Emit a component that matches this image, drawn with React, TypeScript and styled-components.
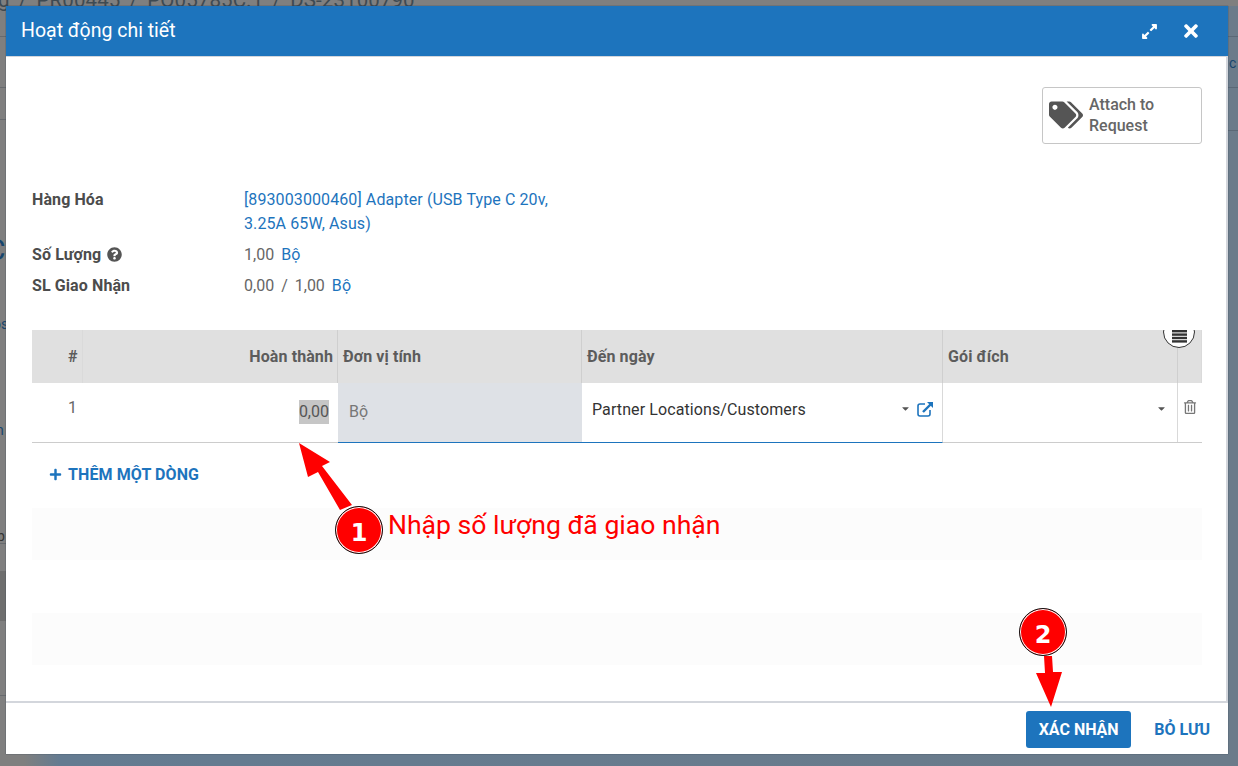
import styled, { createGlobalStyle } from 'styled-components';
import { FaExpandAlt, FaTimes, FaTags, FaQuestionCircle, FaPlus, FaRegTrashAlt, FaCaretDown } from 'react-icons/fa';

const GlobalStyle = createGlobalStyle`
  html, body { margin: 0; padding: 0; height: 100%; }
  body { font-family: Roboto, "Liberation Sans", sans-serif; font-size: 16px; letter-spacing: 0.1px; color: #666; }
`;

const BLUE = '#1d74bd';

const Page = styled.div`
  position: relative;
  width: 1238px;
  height: 766px;
  overflow: hidden;
  padding: 6px 10px 12px 6px;
  box-sizing: border-box;
  background: linear-gradient(90deg, #7f7f7f 0, #7f7f7f 24px, #647b91 60px, #6b7b8a 100%);
`;

const TopShade = styled.div`
  position: absolute;
  left: 0;
  right: 0;
  top: 0;
  height: 6px;
  background: #7f7f7f;
`;

const Rule = styled.div<{ $top: number; $left: number; $width: number }>`
  position: absolute;
  top: ${p => p.$top}px;
  left: ${p => p.$left}px;
  width: ${p => p.$width}px;
  height: 1px;
  background: rgba(60, 70, 80, 0.35);
`;

const BackText = styled.span<{ $top: number; $left: number; $size: number; $color?: string }>`
  position: absolute;
  top: ${p => p.$top}px;
  left: ${p => p.$left}px;
  font-size: ${p => p.$size}px;
  line-height: 1;
  white-space: nowrap;
  word-spacing: 4px;
  color: ${p => p.$color || '#16456d'};
`;

const BackPanel = styled.div`
  position: absolute;
  left: 0;
  top: 571px;
  width: 6px;
  height: 50px;
  background: #6e6e6e;
`;

const Modal = styled.div`
  position: relative;
  height: 748px;
  display: flex;
  flex-direction: column;
  background: #fff;
  box-shadow: 0 0 1px #2c3e50;
`;

const Header = styled.div`
  height: 50px;
  flex: none;
  display: flex;
  align-items: center;
  justify-content: space-between;
  padding: 0 27px 0 15px;
  background: ${BLUE};
  color: #fff;
`;

const Title = styled.h4`
  margin: 0;
  font-size: 19.5px;
  font-weight: 400;
  letter-spacing: 0;
  position: relative;
  top: -1px;
`;

const HeaderTools = styled.div`
  display: flex;
  align-items: center;
  gap: 23px;
`;

const Body = styled.div`
  flex: 1;
  min-height: 0;
  padding: 30px 24px 0 26px;
  border-top: 1px solid #d3d6dc;
  border-right: 2px solid #d3d6dc;
  border-bottom: 2px solid #d3d6dc;
  display: flex;
  flex-direction: column;
`;

const ButtonBox = styled.div`
  display: flex;
  justify-content: flex-end;
`;

const AttachButton = styled.button`
  width: 160px;
  height: 57px;
  box-sizing: border-box;
  display: flex;
  align-items: center;
  gap: 6px;
  padding: 0 6px 2px;
  background: #fff;
  border: 1px solid #c6c6c6;
  border-radius: 3px;
  font: 500 16px/21px Roboto, sans-serif;
  color: #666;
  text-align: left;
`;

const FieldGrid = styled.div`
  margin-top: 44px;
  display: grid;
  grid-template-columns: 212px 320px;
  row-gap: 7px;
  line-height: 24px;
`;

const Label = styled.div`
  font-weight: 700;
  color: #4c4c4c;
  display: flex;
  align-items: flex-start;
  gap: 6px;
`;

const HelpIcon = styled(FaQuestionCircle)`
  margin-top: 4px;
  color: #555;
`;

const Value = styled.div`
  color: #666;
  display: flex;
  gap: 7px;
  letter-spacing: 0;
`;

const ProductLink = styled.a`
  color: ${BLUE};
  letter-spacing: 0.1px;
`;

const TableWrap = styled.div`
  position: relative;
  margin-top: 32px;
  overflow: hidden;
`;

const Row = styled.div<{ $head?: boolean }>`
  display: grid;
  grid-template-columns: 51px 255px 244px 361px 235px 24px;
  height: ${p => (p.$head ? 53 : 60)}px;
  background: ${p => (p.$head ? '#e0e0e0' : '#fff')};
  border-bottom: ${p => (p.$head ? 'none' : '1px solid #ccc')};
  box-sizing: border-box;
`;

const HeadCell = styled.div<{ $right?: boolean; $index?: boolean; $line?: boolean }>`
  display: flex;
  align-items: center;
  justify-content: ${p => (p.$right ? 'flex-end' : 'flex-start')};
  padding: 0 ${p => (p.$right ? 4 : 5)}px 0 ${p => (p.$index ? 36 : 5)}px;
  font-weight: 700;
  color: #5c5c5c;
  border-right: 1px solid ${p => (p.$line ? '#cfcfcf' : '#dadada')};
`;

const IndexCell = styled.div`
  padding: 15px 0 0 36px;
  color: #666;
`;

const QtyCell = styled.div`
  display: flex;
  justify-content: flex-end;
  align-items: flex-start;
  padding: 17px 9px 0 0;
`;

const Selected = styled.span`
  background: #c6c6c6;
  color: #555;
  line-height: 24px;
  letter-spacing: 0;
`;

const ReadonlyCell = styled.div`
  background: #dee1e6;
  padding: 17px 11px 0;
  color: #777;
  line-height: 24px;
  border-bottom: 1px solid ${BLUE};
  margin-bottom: -1px;
`;

const EditCell = styled.div`
  display: flex;
  align-items: flex-start;
  padding: 15px 8px 0 10px;
  gap: 6px;
  color: #333;
  line-height: 24px;
  margin-bottom: -1px;
  border-bottom: 1px solid ${BLUE};
  border-right: 1px solid #d9d9d9;
`;

const PlainCell = styled.div`
  display: flex;
  align-items: flex-start;
  justify-content: flex-end;
  padding: 15px 10px 0 0;
  border-right: 1px solid #d9d9d9;
`;

const TrashCell = styled.div`
  padding: 16px 0 0 5px;
  color: #777;
`;

const LocationName = styled.span`
  flex: 1;
`;

const Caret = styled(FaCaretDown)`
  color: #555;
  font-size: 11px;
  margin-top: 5px;
`;

const OptionalToggle = styled.div`
  position: absolute;
  top: -14px;
  right: 7px;
  width: 32px;
  height: 32px;
  border: 1px solid #333;
  border-radius: 50%;
  background: #fff;
  display: flex;
  align-items: center;
  justify-content: center;
  box-sizing: border-box;
`;

const AddLine = styled.a`
  margin: 19px 0 0 17px;
  height: 24px;
  display: flex;
  align-items: center;
  gap: 6px;
  color: ${BLUE};
  font-weight: 700;
`;

const Stripe = styled.div<{ $top: number }>`
  height: 52px;
  flex: none;
  margin-top: ${p => p.$top}px;
  background: #fcfcfc;
`;

const Footer = styled.div`
  height: 51px;
  flex: none;
  box-sizing: border-box;
  display: flex;
  align-items: flex-start;
  justify-content: flex-end;
  padding: 8px 18px 0 0;
  gap: 23px;
  background: #fff;
`;

const PrimaryButton = styled.button`
  width: 105px;
  height: 37px;
  border: none;
  border-radius: 3px;
  background: ${BLUE};
  color: #fff;
  font: 700 16px Roboto, sans-serif;
`;

const SecondaryButton = styled.button`
  height: 37px;
  border: none;
  padding: 0;
  background: none;
  color: ${BLUE};
  font: 700 16px Roboto, sans-serif;
`;

const ArrowLayer = styled.svg`
  position: absolute;
  left: 0;
  top: 0;
  pointer-events: none;
`;

const StepBadge = styled.div<{ $x: number; $y: number }>`
  position: absolute;
  left: ${p => p.$x}px;
  top: ${p => p.$y}px;
  width: 48px;
  height: 48px;
  box-sizing: border-box;
  border-radius: 50%;
  background: #f00;
  border: 1px solid #111;
  box-shadow: inset 0 0 0 1px #fff;
  color: #fff;
  font: 700 24px/52px "DejaVu Sans", sans-serif;
  letter-spacing: 0;
  text-align: center;
`;

const Note = styled.div`
  position: absolute;
  left: 388px;
  top: 508px;
  font: 400 26.6px/34px Roboto, sans-serif;
  letter-spacing: 0;
  color: #f00;
  white-space: nowrap;
`;

const ExternalIcon = () => (
  <svg width="17" height="16" viewBox="0 0 17 16" fill="none" stroke={BLUE} style={{ marginTop: 3 }}>
    <path d="M8 3H3a2 2 0 0 0-2 2v8a2 2 0 0 0 2 2h8a2 2 0 0 0 2-2V9" strokeWidth="1.6" />
    <path d="M6 11l8-8" strokeWidth="2.4" />
    <path d="M10 1h6v6z" fill={BLUE} stroke="none" />
  </svg>
);

const ListIcon = () => (
  <svg width="15" height="30" viewBox="0 0 15 30" fill="#333" style={{ marginTop: -2 }}>
    <rect x="0" y="14" width="15" height="2.4" />
    <rect x="0" y="17.4" width="15" height="2.4" />
    <rect x="0" y="20.8" width="15" height="2.4" />
    <rect x="0" y="24.2" width="15" height="2.4" />
  </svg>
);

export default function App() {
  return (
    <Page>
      <GlobalStyle />
      <TopShade />
      <BackText $top={-10} $left={-2} $size={20.5} $color="#3e4a52">g / PR00445 / PO05785C.1 / DS-23100790</BackText>
      <Rule $top={36} $left={0} $width={1238} />
      <Rule $top={87} $left={0} $width={1238} />
      <Rule $top={119} $left={0} $width={6} />
      <Rule $top={130} $left={1228} $width={10} />
      <Rule $top={543} $left={0} $width={6} />
      <Rule $top={695} $left={0} $width={6} />
      <BackText $top={56} $left={1229} $size={14}>c</BackText>
      <BackText $top={235} $left={-14} $size={30}>C</BackText>
      <BackText $top={317} $left={-7} $size={14}>os</BackText>
      <BackText $top={423} $left={-4} $size={14}>n</BackText>
      <BackText $top={529} $left={-3} $size={14} $color="#333">b</BackText>
      <BackPanel />

      <Modal>
        <Header>
          <Title>Hoạt động chi tiết</Title>
          <HeaderTools>
            <FaExpandAlt size={17} />
            <FaTimes size={20} />
          </HeaderTools>
        </Header>
        <Body>
          <ButtonBox>
            <AttachButton>
              <FaTags size={34} color="#555" />
              <span>Attach to<br />Request</span>
            </AttachButton>
          </ButtonBox>
          <FieldGrid>
            <Label>Hàng Hóa</Label>
            <Value><ProductLink>[893003000460] Adapter (USB Type C 20v, 3.25A 65W, Asus)</ProductLink></Value>
            <Label>Số Lượng <HelpIcon size={15} /></Label>
            <Value><span>1,00</span><ProductLink>Bộ</ProductLink></Value>
            <Label>SL Giao Nhận</Label>
            <Value><span>0,00</span><span>/</span><span>1,00</span><ProductLink>Bộ</ProductLink></Value>
          </FieldGrid>
          <TableWrap>
            <Row $head>
              <HeadCell $index>#</HeadCell>
              <HeadCell $right $line>Hoàn thành</HeadCell>
              <HeadCell $line>Đơn vị tính</HeadCell>
              <HeadCell $line>Đến ngày</HeadCell>
              <HeadCell $line>Gói đích</HeadCell>
              <HeadCell />
            </Row>
            <Row>
              <IndexCell>1</IndexCell>
              <QtyCell><Selected>0,00</Selected></QtyCell>
              <ReadonlyCell>Bộ</ReadonlyCell>
              <EditCell>
                <LocationName>Partner Locations/Customers</LocationName>
                <Caret />
                <ExternalIcon />
              </EditCell>
              <PlainCell><Caret /></PlainCell>
              <TrashCell><FaRegTrashAlt size={14} /></TrashCell>
            </Row>
            <OptionalToggle><ListIcon /></OptionalToggle>
          </TableWrap>
          <AddLine><FaPlus size={13} /> THÊM MỘT DÒNG</AddLine>
          <Stripe $top={22} />
          <Stripe $top={53} />
        </Body>
        <Footer>
          <PrimaryButton>XÁC NHẬN</PrimaryButton>
          <SecondaryButton>BỎ LƯU</SecondaryButton>
        </Footer>
      </Modal>

      <ArrowLayer width="1238" height="766">
        <polygon points="299,443 330,462 322,466 352,505 340,510 318,472 308,477" fill="#f00" />
        <polygon points="1044,656 1052,656 1053,672 1062,672 1051,707 1036,673 1045,673" fill="#f00" />
      </ArrowLayer>
      <StepBadge $x={335} $y={506}>1</StepBadge>
      <StepBadge $x={1019} $y={608}>2</StepBadge>
      <Note>Nhập số lượng đã giao nhận</Note>
    </Page>
  );
}
